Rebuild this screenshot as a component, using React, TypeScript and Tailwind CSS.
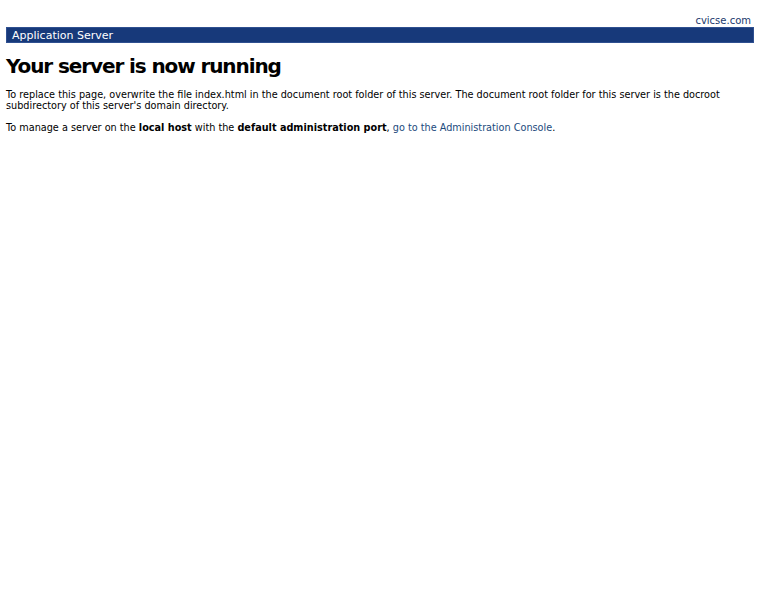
export default function App() {
  return (
    <div className="min-h-[600px] bg-white px-[6px] text-black" style={{ fontFamily: '"DejaVu Sans", Verdana, sans-serif' }}>
      <div className="flex h-[27px] items-end justify-end pb-[1px] pr-[3px] text-[10px] leading-none text-[#1b3a6d]">
        cvicse.com
      </div>
      <div className="flex h-[16px] items-center border border-[#2f5090] bg-[#17397a] px-[5px] text-[11px] leading-none text-white">
        Application Server
      </div>
      <h1 className="mt-[11px] text-[20px] font-bold leading-[24px] tracking-[-1.1px]">Your server is now running</h1>
      <p className="mt-[11px] text-[9.7px] leading-[11px]">
        To replace this page, overwrite the file index.html in the document root folder of this server. The document root folder for this server is the docroot subdirectory of this server's domain directory.
      </p>
      <p className="mt-[11px] text-[9.7px] leading-[11px]">
        To manage a server on the <b>local host</b> with the <b>default administration port</b>,{' '}
        <a className="text-[#1b4a7d]">go to the Administration Console</a>.
      </p>
    </div>
  );
}
